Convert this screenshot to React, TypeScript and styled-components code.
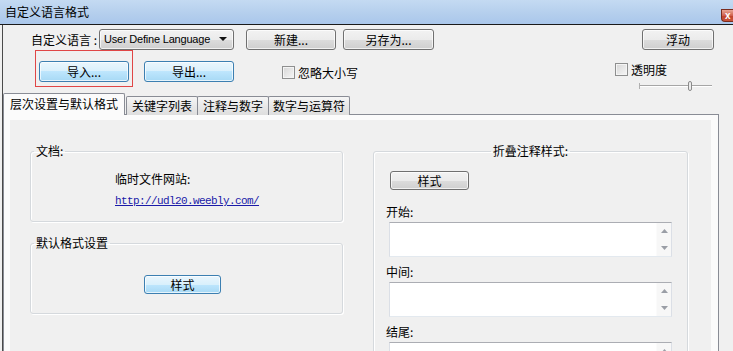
import { FC } from "react";
import styled, { createGlobalStyle } from "styled-components";

const GlobalStyle = createGlobalStyle`
  html, body {
    margin: 0;
    padding: 0;
    background: #f0f0f0;
  }
  body {
    font-family: "Noto Sans CJK SC", "Noto Sans", sans-serif;
    font-size: 12px;
    color: #000;
  }
  * {
    box-sizing: border-box;
  }
`;

const Window = styled.div`
  width: 733px;
  height: 351px;
  overflow: hidden;
  display: flex;
  flex-direction: column;
  background: #f0f0f0;
`;

const TitleBar = styled.div`
  flex: none;
  height: 25px;
  display: flex;
  align-items: flex-start;
  justify-content: space-between;
  background: linear-gradient(#c4daf2, #b5cfed 55%, #aac7eb);
  border-bottom: 1px solid #1a1a1a;
`;

const Title = styled.span`
  margin: 4px 0 0 5px;
  line-height: 16px;
`;

const CloseButton = styled.div`
  flex: none;
  width: 40px;
  height: 13px;
  margin: 9px -28px 0 0;
  border: 1px solid #7a2c1e;
  border-right: none;
  border-radius: 0 0 0 4px;
  background: linear-gradient(#e9a695, #d0624f 50%, #c0432c 51%, #c9553c);
  color: #fff;
  font-family: "Liberation Sans", sans-serif;
  font-weight: bold;
  font-size: 10px;
  line-height: 11px;
  padding-left: 3px;
`;

const Client = styled.div`
  flex: 1;
  min-height: 0;
  margin-left: 2px;
  border-left: 1px solid #4a4a4a;
  display: flex;
  flex-direction: column;
`;

const TopRow = styled.div`
  flex: none;
  display: flex;
  align-items: center;
  height: 22px;
  margin-top: 3px;
`;

const FieldLabel = styled.span`
  width: 68px;
  margin-left: 28px;
  white-space: nowrap;
`;

const Combo = styled.div`
  flex: none;
  width: 135px;
  height: 21px;
  display: flex;
  align-items: center;
  justify-content: space-between;
  padding: 0 6px 0 4px;
  border: 1px solid #707070;
  border-radius: 3px;
  background: linear-gradient(#f2f2f2 0%, #ebebeb 50%, #dddddd 50%, #cfcfcf 100%);
  box-shadow: inset 0 0 0 1px rgba(255, 255, 255, 0.7);
  font-family: "Liberation Sans", sans-serif;
  font-size: 11px;
  letter-spacing: -0.2px;
`;

const ComboArrow = styled.span`
  width: 0;
  height: 0;
  border-left: 4px solid transparent;
  border-right: 4px solid transparent;
  border-top: 4px solid #111;
`;

const Btn = styled.button<{ $w: number; $h?: number; $blue?: boolean }>`
  flex: none;
  width: ${(p) => p.$w}px;
  height: ${(p) => p.$h ?? 21}px;
  padding: 0;
  font: inherit;
  line-height: ${(p) => (p.$h ?? 21) - 2}px;
  color: #000;
  border: 1px solid ${(p) => (p.$blue ? "#3c7fb1" : "#707070")};
  border-radius: 3px;
  background: ${(p) =>
    p.$blue
      ? "linear-gradient(#eaf6fd 0%, #d9f0fc 50%, #bee6fd 50%, #a7d9f5 100%)"
      : "linear-gradient(#f2f2f2 0%, #ebebeb 50%, #dddddd 50%, #cfcfcf 100%)"};
  box-shadow: inset 0 0 0 1px rgba(255, 255, 255, 0.7);
`;

const Spaced = styled.div<{ $left?: number; $top?: number }>`
  margin-left: ${(p) => p.$left ?? 0}px;
  margin-top: ${(p) => p.$top ?? 0}px;
`;

const PushRight = styled.div`
  margin-left: auto;
  margin-right: 19px;
`;

const SecondRow = styled.div`
  flex: none;
  display: flex;
  align-items: flex-start;
  height: 43px;
`;

const Highlight = styled.div`
  margin-left: 32px;
  border: 1px solid #e04646;
  padding: 10px 3px 4px;
`;

const CheckRow = styled.label`
  display: flex;
  align-items: center;
  height: 17px;
  gap: 3px;
  white-space: nowrap;
`;

const CheckBox = styled.span`
  flex: none;
  width: 13px;
  height: 13px;
  border: 1px solid #8e8f8f;
  background: linear-gradient(135deg, #d6d6d6, #f6f6f6);
  box-shadow: inset 0 0 0 1px #f4f4f4;
`;

const TransparencyBox = styled.div`
  margin-left: auto;
  margin-right: 21px;
  margin-top: 11px;
  width: 97px;
  display: flex;
  flex-direction: column;
`;

const SliderSvg = styled.svg`
  align-self: flex-end;
  margin-top: 3px;
`;

const TabStrip = styled.div`
  flex: none;
  display: flex;
  align-items: flex-end;
  height: 22px;
  margin-bottom: -1px;
`;

const Tab = styled.div<{ $w: number; $active?: boolean }>`
  flex: none;
  width: ${(p) => p.$w}px;
  height: ${(p) => (p.$active ? 22 : 19)}px;
  margin-left: ${(p) => (p.$active ? 0 : -1)}px;
  border: 1px solid #898c95;
  border-bottom: none;
  border-radius: 2px 2px 0 0;
  text-align: center;
  line-height: ${(p) => (p.$active ? 20 : 18)}px;
  white-space: nowrap;
  background: ${(p) => (p.$active ? "#fbfbfb" : "linear-gradient(#f6f6f6, #e8e8e8 50%, #dedede)")};
  position: ${(p) => (p.$active ? "relative" : "static")};
  z-index: ${(p) => (p.$active ? 1 : 0)};
  &:nth-child(2) {
    margin-left: 1px;
  }
`;

const Panel = styled.div`
  flex: 1;
  min-height: 0;
  margin-right: 14px;
  border: 1px solid #898c95;
  border-bottom: none;
  background: #fbfbfb;
  padding: 5px 7px 0 6px;
  display: flex;
`;

const PanelInner = styled.div`
  flex: 1;
  background: #f0f0f0;
  padding: 24px 22px 0 20px;
  display: flex;
  gap: 30px;
`;

const LeftColumn = styled.div`
  width: 313px;
  display: flex;
  flex-direction: column;
`;

const Group = styled.fieldset<{ $w: number; $top?: number }>`
  width: ${(p) => p.$w}px;
  margin: ${(p) => p.$top ?? 0}px 0 0;
  padding: 0;
  min-width: 0;
  border: 1px solid #d5d9dd;
  border-radius: 3px;
  box-shadow: inset 1px 1px 0 #fff, 1px 1px 0 #fff;
  align-self: flex-start;
`;

const Legend = styled.legend<{ $center?: boolean }>`
  padding: 0 2px;
  margin-left: ${(p) => (p.$center ? "auto" : "3px")};
  margin-right: ${(p) => (p.$center ? "auto" : "0")};
  line-height: 14px;
`;

const DocBody = styled.div`
  padding: 14px 0 13px 84px;
  line-height: 14px;
`;

const Link = styled.a`
  display: block;
  margin-top: 8px;
  font-family: "Liberation Mono", monospace;
  font-size: 11px;
  letter-spacing: -0.6px;
  line-height: 14px;
  color: #1a1aa8;
  text-decoration: underline;
`;

const StyleBody = styled.div`
  padding: 25px 0 19px 113px;
`;

const FoldBody = styled.div`
  padding: 13px 15px 0 15px;
`;

const MemoLabel = styled.div<{ $top: number }>`
  margin: ${(p) => p.$top}px 0 0 -3px;
  line-height: 14px;
`;

const Memo = styled.div`
  width: 283px;
  height: 35px;
  margin-top: 3px;
  display: flex;
  background: #fff;
  border: 1px solid #dbdfe6;
  border-top-color: #abadb3;
  border-bottom-color: #e3e9ef;
`;

const MemoText = styled.div`
  flex: 1;
`;

const ScrollColumn = styled.div`
  flex: none;
  width: 15px;
  display: flex;
  flex-direction: column;
  background: #f7f7f7;
  border-left: 1px solid #fbfbfb;
`;

const ScrollArrow = styled.div`
  flex: 1;
  display: flex;
  align-items: center;
  justify-content: center;
`;

const Arrow: FC<{ down?: boolean }> = ({ down }) => (
  <svg width="7" height="4" viewBox="0 0 7 4">
    <path d={down ? "M0 0 L7 0 L3.5 4 Z" : "M0 4 L7 4 L3.5 0 Z"} fill="#9a9ea6" />
  </svg>
);

const Textbox: FC = () => (
  <Memo>
    <MemoText />
    <ScrollColumn>
      <ScrollArrow>
        <Arrow />
      </ScrollArrow>
      <ScrollArrow>
        <Arrow down />
      </ScrollArrow>
    </ScrollColumn>
  </Memo>
);

const Slider: FC = () => (
  <SliderSvg width="73" height="10" viewBox="0 0 73 10">
    <line x1="0" y1="4.5" x2="73" y2="4.5" stroke="#a6a6a6" />
    <line x1="0" y1="5.5" x2="73" y2="5.5" stroke="#ffffff" />
    <line x1="0.5" y1="2" x2="0.5" y2="8" stroke="#b0b0b0" />
    <rect x="49.5" y="0.5" width="3" height="9" rx="1.5" fill="#ececec" stroke="#8a8a8a" />
  </SliderSvg>
);

const tabs = [
  { label: "层次设置与默认格式", w: 122 },
  { label: "关键字列表", w: 72 },
  { label: "注释与数字", w: 72 },
  { label: "数字与运算符", w: 82 },
];

export default function App() {
  return (
    <>
      <GlobalStyle />
      <Window>
        <TitleBar>
          <Title>自定义语言格式</Title>
          <CloseButton>x</CloseButton>
        </TitleBar>
        <Client>
          <TopRow>
            <FieldLabel>自定义语言 :</FieldLabel>
            <Combo>
              <span>User Define Language</span>
              <ComboArrow />
            </Combo>
            <Spaced $left={12}>
              <Btn $w={90}>新建...</Btn>
            </Spaced>
            <Spaced $left={7}>
              <Btn $w={91}>另存为...</Btn>
            </Spaced>
            <PushRight>
              <Btn $w={72}>浮动</Btn>
            </PushRight>
          </TopRow>
          <SecondRow>
            <Highlight>
              <Btn $w={90} $blue>
                导入...
              </Btn>
            </Highlight>
            <Spaced $left={11} $top={11}>
              <Btn $w={90} $blue>
                导出...
              </Btn>
            </Spaced>
            <Spaced $left={48} $top={14}>
              <CheckRow>
                <CheckBox />
                忽略大小写
              </CheckRow>
            </Spaced>
            <TransparencyBox>
              <CheckRow>
                <CheckBox />
                透明度
              </CheckRow>
              <Slider />
            </TransparencyBox>
          </SecondRow>
          <TabStrip>
            {tabs.map((t, i) => (
              <Tab key={t.label} $w={t.w} $active={i === 0}>
                {t.label}
              </Tab>
            ))}
          </TabStrip>
          <Panel>
            <PanelInner>
              <LeftColumn>
                <Group $w={313}>
                  <Legend>文档:</Legend>
                  <DocBody>
                    临时文件网站:
                    <Link href="#">http://udl20.weebly.com/</Link>
                  </DocBody>
                </Group>
                <Group $w={313} $top={14}>
                  <Legend>默认格式设置</Legend>
                  <StyleBody>
                    <Btn $w={77} $h={19} $blue>
                      样式
                    </Btn>
                  </StyleBody>
                </Group>
              </LeftColumn>
              <Group $w={315}>
                <Legend $center>折叠注释样式:</Legend>
                <FoldBody>
                  <Spaced $left={1}>
                    <Btn $w={79} $h={19}>
                      样式
                    </Btn>
                  </Spaced>
                  <MemoLabel $top={15}>开始:</MemoLabel>
                  <Textbox />
                  <MemoLabel $top={8}>中间:</MemoLabel>
                  <Textbox />
                  <MemoLabel $top={8}>结尾:</MemoLabel>
                  <Textbox />
                </FoldBody>
              </Group>
            </PanelInner>
          </Panel>
        </Client>
      </Window>
    </>
  );
}
